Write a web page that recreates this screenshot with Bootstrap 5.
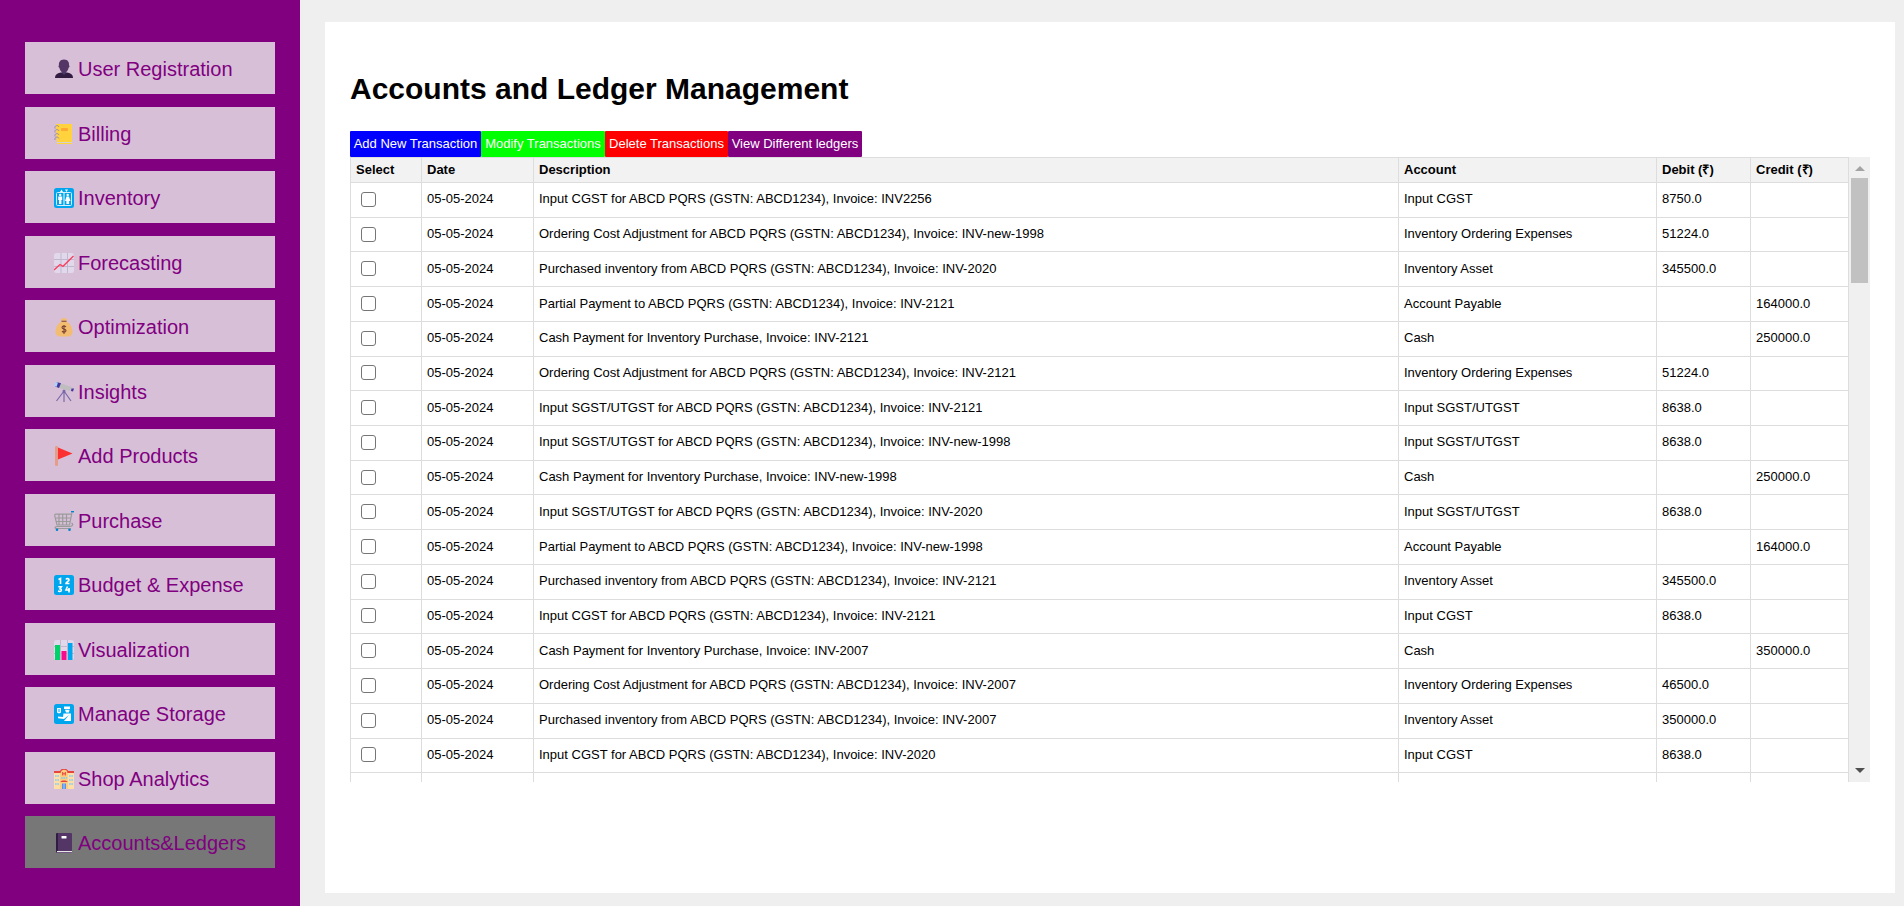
<!DOCTYPE html>
<html lang="en">
<head>
<meta charset="utf-8">
<meta name="viewport" content="width=device-width, initial-scale=1">
<title>Accounts and Ledger Management</title>
<link rel="stylesheet" href="https://cdn.jsdelivr.net/npm/bootstrap@5.3.0/dist/css/bootstrap.min.css">
<style>
  body { background: #efefef; color: #000; font-family: "Liberation Sans", Arial, sans-serif; }
  .side-menu { width: 300px; background: purple; padding: 42px 25px 38px; gap: 12px; }
  .side-menu .nav-link { background: thistle; color: purple; font-size: 20px; line-height: 24px; padding: 15px 28px 13px; gap: 3px; border-radius: 0; white-space: nowrap; }
  .side-menu .nav-link.active { background: #777; }
  .side-menu svg { width: 22px; height: 22px; padding: 1px; flex: none; }
  .panel { margin: 22px 9px 13px 25px; background: #fff; padding: 49px 25px 20px; min-width: 0; }
  .panel h1 { font-size: 30px; line-height: 36px; font-weight: 700; margin: 0 0 24px; }
  .tool-btn { color: #fff; border: 0; border-radius: 1px; font-size: 13px; line-height: 18px; padding: 4px 0; width: 131px; }
  .tool-blue { background: blue; }
  .tool-lime { background: lime; width: 124px; }
  .tool-red { background: red; width: 123px; }
  .tool-purple { background: purple; width: 134px; }
  .ledger-frame { height: 625px; }
  .ledger-scroll { overflow: hidden auto; min-width: 0; scrollbar-width: none; }
  .scroll-rail { width: 21px; background: #f0f0f0; padding: 9px 2px; }
  .scroll-rail svg { width: 10px; height: 5px; display: block; margin: 0 auto; }
  .scroll-grip { height: 105px; background: #c1c1c1; margin: 7px 0 auto; }
  .ledger { width: 100%; height: 651px; table-layout: fixed; font-size: 13px; line-height: 18px; border-collapse: collapse; }
  .ledger th, .ledger td { border: 1px solid #ddd; padding: 0 5px 1px; text-align: left; vertical-align: middle; }
  .ledger th { background: #f2f2f2; }
  .ledger thead tr { height: 25px; }
  .ledger input { appearance: none; display: block; width: 15px; height: 15px; margin: 0 0 0 5px; background: #fff; border: 1px solid #767676; border-radius: 3px; }
  .ledger input:checked { background: #0075ff; }
  .c-select { width: 71px; } .c-date { width: 112px; } .c-account { width: 258px; } .c-debit { width: 94px; } .c-credit { width: 98px; }
</style>
</head>
<body>
<div class="d-flex min-vh-100">
  <nav class="side-menu nav flex-column flex-nowrap flex-shrink-0 justify-content-between" aria-label="Main">
    <a class="nav-link d-flex align-items-center" href="#"><svg viewBox="0 0 20 20"><path d="M1 19c0-4 3-5 6-5.500h6c3 .5 6 1.500 6 5.500z" fill="#321b41"/><path d="M8 12h4v2l-2 2-2-2z" fill="#433b6b"/><path d="M10 .5c4 0 5.500 3 5 6 1 0 .5 2-.4 2.200C14 11.500 12 14 10 14s-4-2.500-4.600-5.300C4.500 8.500 4 6.500 5 6.500c-.5-3 1-6 5-6z" fill="#533566"/></svg>User Registration</a>
    <a class="nav-link d-flex align-items-center" href="#"><svg viewBox="0 0 20 20"><path d="M2 0h16v20H3z" fill="#ffd23e"/><path d="M3 18h15v1H3z" fill="#d3d3d3"/><rect x="7" y="4" width="7" height="3" rx="1" fill="#ffa834"/><g fill="none" stroke="#998ea4" stroke-width="1"><path d="M1 4.500c-1-3 3-4 4-1.500M1 8.500c-1-3 3-4 4-1.500M1 12.500c-1-3 3-4 4-1.500M1 16c-1-3 3-4 4-1.500"/></g></svg>Billing</a>
    <a class="nav-link d-flex align-items-center" href="#"><svg viewBox="0 0 20 20"><rect width="20" height="20" rx="2.500" fill="#00a6ed"/><rect x="2.500" y="4.500" width="15" height="13" rx="1" fill="none" stroke="#d8f0fc"/><path d="M10 5v12" stroke="#fff"/><g fill="#fff"><path d="M6 4l1.500-2.500L9 4zM11 1.500h3L12.500 4z"/><circle cx="6.200" cy="7" r="1.200"/><circle cx="13.700" cy="7" r="1.200"/><path d="M4.300 8.500h3.900V12H7.400v4H5v-4h-.8zM12.500 8.500h2.400L16.500 13h-1.400v3h-2.700v-3H11z"/></g></svg>Inventory</a>
    <a class="nav-link d-flex align-items-center" href="#"><svg viewBox="0 0 20 20"><rect width="20" height="20" rx="2.500" fill="#e1d8ec"/><path d="M0 6.500h20M0 13.500h20M7 0v20M13.500 0v20" stroke="#c2b8ce"/><path d="M0 17l6-5.500 3 1.800L19.500 3" fill="none" stroke="#f8415f" stroke-width="1.400"/></svg>Forecasting</a>
    <a class="nav-link d-flex align-items-center" href="#"><svg viewBox="0 0 20 20"><path d="M7.500 4.500 6.500 1.500 8 2l2-1.500L12 2l1.500-.5-1 3c4 2 6 6.500 6 10 0 3.500-2 5-4.500 5H6c-2.500 0-4.500-1.500-4.500-5 0-3.500 2-8 6-10z" fill="#f3bd71"/><path d="M7.500 4.300h5" stroke="#8c5543" stroke-width="1.200"/><path d="M12 10c-1-1.300-4-1.200-4 .6s4 1.200 4 3-3 2-4 .5M10 8v9" fill="none" stroke="#7d4533" stroke-width="1.100"/></svg>Optimization</a>
    <a class="nav-link d-flex align-items-center" href="#"><svg viewBox="0 0 20 20"><path d="M10 9 2.500 19M10 9v11M10 9l7 10" stroke="#7968a8" stroke-width="1.200"/><circle cx="10" cy="9" r="1.500" fill="#7968a8"/><path d="M5.500 1 18 5l-1.700 4L5 6z" fill="#bebebe"/><path d="M2.500 0 7 1.200 5 6 1 4.500z" fill="#46359d"/><path d="M1.500 0 4 .5 2.500 5 .5 4z" fill="#a6d8ff"/><path d="M17.500 6.500h2.500l-1 3-2-.6z" fill="#46359d"/></svg>Insights</a>
    <a class="nav-link d-flex align-items-center" href="#"><svg viewBox="0 0 20 20"><rect x="1" width="3" height="20" rx="1.200" fill="#e39d89"/><path d="M4 1.500 18.500 7.500 4 13.500z" fill="#fc3030"/></svg>Add Products</a>
    <a class="nav-link d-flex align-items-center" href="#"><svg viewBox="0 0 20 20"><g fill="none" stroke="#9b9b9b" stroke-width="1.200"><path d="M18 1.500 15.500 14H3L.8 5c-.3-1.300.2-1.800 1-1.800H17M2 7h15M2.500 10.500h14M5 3.500v10.500M8.700 3.500V14M12.500 3.500V14M17.500 12c3 2-.5 3.500-2 3.500H3.500c-3 0-3 2-1 2H17"/></g><path d="M17 .5h3" stroke="#0084ce" stroke-width="1.800"/><circle cx="3" cy="18.700" r="1.300" fill="#0084ce"/><circle cx="15.500" cy="18.700" r="1.300" fill="#0084ce"/></svg>Purchase</a>
    <a class="nav-link d-flex align-items-center" href="#"><svg viewBox="0 0 20 20"><rect width="20" height="20" rx="2.500" fill="#00a6ed"/><g fill="none" stroke="#fff" stroke-width="1.600"><path d="M4.500 4.500 6.500 3.500V9M12 4.500c.7-1.500 3.200-1 3 .5-.2 1.200-3 2.200-3 3.500h3.500M4.300 11.800h3L6 13.800c2 .2 1.700 2.800-.3 2.700L4 16M13.500 11.500 12 15h4M15 13v4.500"/></g></svg>Budget &amp; Expense</a>
    <a class="nav-link d-flex align-items-center" href="#"><svg viewBox="0 0 20 20"><rect width="20" height="20" rx="2.500" fill="#e1d8ec"/><path d="M0 6.500h20M0 13.500h20M6.500 0v20M13.500 0v20" stroke="#c2b8ce"/><path d="M1 5h5v15H1z" fill="#00d26a"/><path d="M7.500 11h5v9h-5z" fill="#f70a8d"/><path d="M14 3h4.500v17H14z" fill="#00a6ed"/></svg>Visualization</a>
    <a class="nav-link d-flex align-items-center" href="#"><svg viewBox="0 0 20 20"><rect width="20" height="20" rx="2.500" fill="#00a6ed"/><g fill="#fff"><path d="M3 4h4v4.500L5 9.500 3 8.500zM10 2.500h6V5h-6zM11 5.800h4.500L15 8.500h-3zM9.500 9.500H17V17h-7l5-6-5 4-6-.8V12.500l5 .5z"/></g><path d="M5 5v3" stroke="#00a6ed"/></svg>Manage Storage</a>
    <a class="nav-link d-flex align-items-center" href="#"><svg viewBox="0 0 20 20"><path d="M0 3h20v17H0z" fill="#ffdea7"/><path d="M0 2h6v2H0zM14 2h6v2h-6z" fill="#e6433f"/><path d="M6 20V4c0-5 8-5 8 0v16z" fill="#ffce7c"/><path d="M6 4c0-5 8-5 8 0" fill="none" stroke="#e6433f" stroke-width="1.200"/><path d="M8.700 3v3.500M11.300 3v3.500M8.700 4.800h2.600" stroke="#e6433f"/><path d="M6.500 13c0-2 7-2 7 0z" fill="#e6433f"/><path d="M1 7h4M1 11h4M1 15h4M15 7h4M15 11h4M15 15h4M7 9h6" stroke="#83cbff" stroke-width="1.700" stroke-dasharray="1.700 .6"/><path d="M8 14.500h4V20H8z" fill="#5092ff"/><path d="M10 14.500V20" stroke="#ffdea7" stroke-width=".7"/></svg>Shop Analytics</a>
    <a class="nav-link active d-flex align-items-center" aria-current="page" href="#"><svg viewBox="0 0 20 20"><rect x="2" width="16" height="20" rx="1" fill="#533566"/><path d="M2 1c0-1 2-1 2-1v18l-2 1z" fill="#321b41"/><path d="M3 18h15v1.200H3z" fill="#e6e6e6"/><rect x="7.500" y="3" width="5" height="2.500" rx=".5" fill="#fff"/></svg>Accounts&amp;Ledgers</a>
  </nav>
  <main class="panel flex-grow-1">
    <h1>Accounts and Ledger Management</h1>
    <div class="d-flex">
      <button type="button" class="tool-btn tool-blue text-nowrap">Add New Transaction</button>
      <button type="button" class="tool-btn tool-lime text-nowrap">Modify Transactions</button>
      <button type="button" class="tool-btn tool-red text-nowrap">Delete Transactions</button>
      <button type="button" class="tool-btn tool-purple text-nowrap">View Different ledgers</button>
    </div>
    <div class="ledger-frame d-flex">
      <div class="ledger-scroll flex-grow-1">
        <table class="ledger">
          <colgroup><col class="c-select"><col class="c-date"><col><col class="c-account"><col class="c-debit"><col class="c-credit"></colgroup>
          <thead><tr><th scope="col">Select</th><th scope="col">Date</th><th scope="col">Description</th><th scope="col">Account</th><th scope="col">Debit (₹)</th><th scope="col">Credit (₹)</th></tr></thead>
          <tbody id="rows"></tbody>
        </table>
      </div>
      <div class="scroll-rail d-flex flex-column flex-shrink-0" aria-hidden="true">
        <svg viewBox="0 0 10 5"><path d="M0 5 5 0l5 5z" fill="#a3a3a3"/></svg>
        <div class="scroll-grip"></div>
        <svg viewBox="0 0 10 5"><path d="M0 0l5 5 5-5z" fill="#505050"/></svg>
      </div>
    </div>
  </main>
</div>
<script src="https://cdn.jsdelivr.net/npm/bootstrap@5.3.0/dist/js/bootstrap.bundle.min.js"></script>
<script>
  const gst = ' ABCD PQRS (GSTN: ABCD1234), Invoice: ';
  const kinds = {
    cgst: ['Input CGST for' + gst, 'Input CGST'],
    sgst: ['Input SGST/UTGST for' + gst, 'Input SGST/UTGST'],
    order: ['Ordering Cost Adjustment for' + gst, 'Inventory Ordering Expenses'],
    asset: ['Purchased inventory from' + gst, 'Inventory Asset'],
    part: ['Partial Payment to' + gst, 'Account Payable'],
    cash: ['Cash Payment for Inventory Purchase, Invoice: ', 'Cash']
  };
  const entries = [
    ['cgst', 'INV2256', '8750.0', ''], ['order', 'INV-new-1998', '51224.0', ''], ['asset', 'INV-2020', '345500.0', ''],
    ['part', 'INV-2121', '', '164000.0'], ['cash', 'INV-2121', '', '250000.0'], ['order', 'INV-2121', '51224.0', ''],
    ['sgst', 'INV-2121', '8638.0', ''], ['sgst', 'INV-new-1998', '8638.0', ''], ['cash', 'INV-new-1998', '', '250000.0'],
    ['sgst', 'INV-2020', '8638.0', ''], ['part', 'INV-new-1998', '', '164000.0'], ['asset', 'INV-2121', '345500.0', ''],
    ['cgst', 'INV-2121', '8638.0', ''], ['cash', 'INV-2007', '', '350000.0'], ['order', 'INV-2007', '46500.0', ''],
    ['asset', 'INV-2007', '350000.0', ''], ['cgst', 'INV-2020', '8638.0', '']
  ];
  const body = document.getElementById('rows');
  entries.forEach(([kind, invoice, debit, credit]) => {
    const tr = body.insertRow();
    const box = document.createElement('input');
    box.type = 'checkbox';
    box.setAttribute('aria-label', 'Select transaction ' + body.rows.length);
    tr.insertCell().append(box);
    ['05-05-2024', kinds[kind][0] + invoice, kinds[kind][1], debit, credit]
      .forEach(text => { tr.insertCell().textContent = text; });
  });
  // empty row that closes the list
  const last = body.insertRow();
  for (let i = 0; i < 6; i++) last.insertCell().textContent = '\u00a0';
</script>
</body>
</html>
